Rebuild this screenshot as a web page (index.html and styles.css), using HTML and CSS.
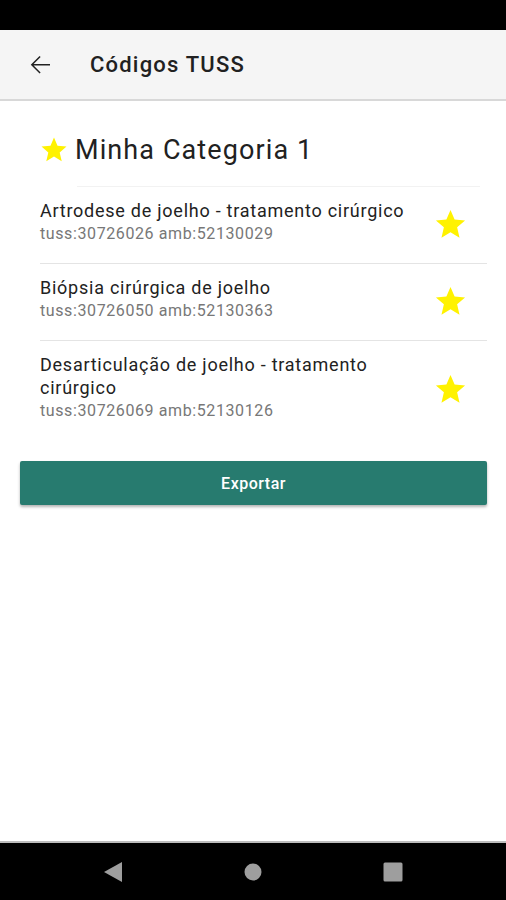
FILE: index.html
```html
<!DOCTYPE html>
<html lang="pt">
<head>
    <meta charset="UTF-8">
    <meta name="viewport" content="width=device-width, initial-scale=1.0">
    <title>Códigos TUSS</title>
    <link rel="stylesheet" href="styles.css">
</head>
<body>
    <div class="status-bar"></div>
    <header class="app-bar">
        <button class="back-button" aria-label="Voltar">
            <svg viewBox="0 0 24 24" width="30" height="30"><path d="M20 11.2H6.9l5.6-5.6-.85-.85L4.6 11.8l7.05 7.05.85-.85-5.6-5.6H20z" fill="#222"/></svg>
        </button>
        <h1 class="app-title">Códigos TUSS</h1>
    </header>

    <main class="content">
        <div class="category">
            <svg class="star" viewBox="0 0 24 24" width="30" height="30"><path d="M12 17.27L18.18 21l-1.64-7.03L22 9.24l-7.19-.61L12 2 9.19 8.63 2 9.24l5.46 4.73L5.82 21z"/></svg>
            <span>Minha Categoria 1</span>
        </div>
        <hr class="fade-line">

        <ul class="code-list">
            <li class="code-item">
                <div class="code-text">
                    <div class="code-name">Artrodese de joelho - tratamento cirúrgico</div>
                    <div class="code-ids">tuss:30726026 amb:52130029</div>
                </div>
                <svg class="star" viewBox="0 0 24 24" width="35" height="35"><path d="M12 17.27L18.18 21l-1.64-7.03L22 9.24l-7.19-.61L12 2 9.19 8.63 2 9.24l5.46 4.73L5.82 21z"/></svg>
            </li>
            <li class="code-item">
                <div class="code-text">
                    <div class="code-name">Biópsia cirúrgica de joelho</div>
                    <div class="code-ids">tuss:30726050 amb:52130363</div>
                </div>
                <svg class="star" viewBox="0 0 24 24" width="35" height="35"><path d="M12 17.27L18.18 21l-1.64-7.03L22 9.24l-7.19-.61L12 2 9.19 8.63 2 9.24l5.46 4.73L5.82 21z"/></svg>
            </li>
            <li class="code-item">
                <div class="code-text">
                    <div class="code-name">Desarticulação de joelho - tratamento cirúrgico</div>
                    <div class="code-ids">tuss:30726069 amb:52130126</div>
                </div>
                <svg class="star" viewBox="0 0 24 24" width="35" height="35"><path d="M12 17.27L18.18 21l-1.64-7.03L22 9.24l-7.19-.61L12 2 9.19 8.63 2 9.24l5.46 4.73L5.82 21z"/></svg>
            </li>
        </ul>

        <button class="export-button">Exportar</button>
    </main>

    <nav class="nav-bar">
        <svg viewBox="0 0 20 22" width="20" height="22"><path d="M19 1v20L1 11z" fill="#9e9e9e"/></svg>
        <svg viewBox="0 0 18 18" width="18" height="18"><circle cx="9" cy="9" r="8.5" fill="#9e9e9e"/></svg>
        <svg viewBox="0 0 20 20" width="20" height="20"><rect x="0.5" y="0.5" width="19" height="19" rx="1.5" fill="#9e9e9e"/></svg>
    </nav>
</body>
</html>
```

FILE: styles.css
```css
* {
    box-sizing: border-box;
}

body {
    margin: 0;
    height: 900px;
    display: flex;
    flex-direction: column;
    background: #fff;
    color: #212121;
    font-family: Roboto, "Noto Sans", Arial, sans-serif;
}

.status-bar {
    height: 30px;
    background: #000;
}

.app-bar {
    height: 71px;
    display: flex;
    align-items: center;
    background: #f5f5f5;
    border-bottom: 2px solid #d8d8d8;
}

.back-button {
    width: 30px;
    height: 30px;
    margin-left: 25px;
    padding: 0;
    border: none;
    background: none;
    display: flex;
}

.app-title {
    margin: 0 0 0 35px;
    font-size: 22px;
    font-weight: 500;
    letter-spacing: 1.2px;
    color: #212121;
}

.content {
    flex: 1;
    padding: 0 19px 0 20px;
}

.star {
    fill: #fff200;
    flex-shrink: 0;
}

.category {
    display: flex;
    align-items: center;
    gap: 6px;
    margin: 32px 0 0 19px;
    font-size: 27px;
    line-height: 34px;
    letter-spacing: 1.1px;
}

.fade-line {
    margin: 19px 7px 0 57px;
    border: none;
    border-top: 1px solid #f2f2f2;
}

.code-list {
    list-style: none;
    margin: 0;
    padding: 0 0 0 20px;
}

.code-item {
    display: flex;
    align-items: center;
    padding: 12px 0 18px;
    border-bottom: 1px solid #e4e4e4;
}

.code-item:last-child {
    border-bottom: none;
}

.code-text {
    flex: 1;
    padding-right: 16px;
}

.code-name {
    font-size: 18px;
    line-height: 23px;
    letter-spacing: 0.75px;
    color: #222;
}

.code-ids {
    font-size: 16px;
    line-height: 23px;
    letter-spacing: 0.6px;
    color: #777;
}

.code-item .star {
    margin: 4px 19px 0 0;
}

.export-button {
    display: block;
    width: 100%;
    height: 44px;
    margin-top: 21px;
    border: none;
    border-radius: 2px;
    background: #277b6f;
    color: #fff;
    font-family: Roboto, Arial, sans-serif;
    font-size: 16px;
    font-weight: 500;
    letter-spacing: 0.5px;
    box-shadow: 0 2px 3px rgba(0, 0, 0, 0.3);
}

.nav-bar {
    height: 59px;
    display: flex;
    align-items: center;
    justify-content: center;
    gap: 121px;
    background: #000;
    border-top: 2px solid #bdbdbd;
}
```
